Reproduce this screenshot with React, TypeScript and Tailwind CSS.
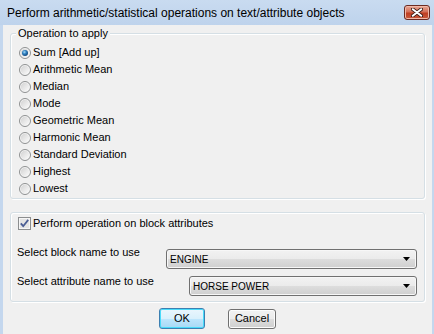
import React from "react";

const operations = [
  "Sum [Add up]",
  "Arithmetic Mean",
  "Median",
  "Mode",
  "Geometric Mean",
  "Harmonic Mean",
  "Standard Deviation",
  "Highest",
  "Lowest",
];

function Radio({ checked }: { checked?: boolean }) {
  return (
    <svg width="12" height="12" viewBox="0 0 12 12" className="shrink-0">
      <defs>
        <linearGradient id="radioFill" x1="0" y1="0" x2="1" y2="1">
          <stop offset="0" stopColor="#d2d2d2" />
          <stop offset="1" stopColor="#fbfbfb" />
        </linearGradient>
        <radialGradient id="radioDot" cx="0.4" cy="0.35" r="0.7">
          <stop offset="0" stopColor="#a6dbf8" />
          <stop offset="0.45" stopColor="#2e7fc0" />
          <stop offset="1" stopColor="#0d3f73" />
        </radialGradient>
      </defs>
      <circle cx="6" cy="6" r="5.5" fill="#f4f4f4" stroke="#8e9091" />
      <circle cx="6" cy="6" r="4.2" fill="url(#radioFill)" />
      {checked && <circle cx="6" cy="6" r="3" fill="url(#radioDot)" />}
    </svg>
  );
}

function Checkbox() {
  return (
    <svg width="13" height="13" viewBox="0 0 13 13" className="shrink-0">
      <rect x="0.5" y="0.5" width="12" height="12" fill="#f6f6f6" stroke="#8c8e8f" />
      <rect x="2" y="2" width="9" height="9" fill="#e4e4e4" />
      <path d="M2.8 6.4 L5.2 9.2 L10.2 2.9" fill="none" stroke="#4a5d94" strokeWidth="1.8" />
    </svg>
  );
}

function Combo({ value, width }: { value: string; width: string }) {
  return (
    <div
      className={`${width} h-[20px] flex items-center pl-[3px] pr-[6px] rounded-[3px] border border-[#707070] bg-[linear-gradient(#f2f2f2_0%,#ebebeb_50%,#dddddd_50%,#cfcfcf_100%)] shadow-[inset_0_0_0_1px_#f7f7f7] text-[10px]`}
    >
      <span className="flex-1">{value}</span>
      <svg width="7" height="4" viewBox="0 0 7 4">
        <path d="M0 0 H7 L3.5 4 Z" fill="#000" />
      </svg>
    </div>
  );
}

export default function App() {
  return (
    <div className="w-[434px] h-[334px] flex flex-col bg-[#c4d7ee] text-[11px] leading-[13px] text-black font-['Liberation_Sans',Arial,sans-serif]">
      {/* Title bar */}
      <div className="h-[25px] flex items-center pl-[7px] pr-[4px] bg-[linear-gradient(#c9dbf0,#bed3ec)]">
        <span className="text-[12px] flex-1 pt-[1px]">
          Perform arithmetic/statistical operations on text/attribute objects
        </span>
        <div className="self-start mt-[5px] w-[26px] h-[15px] rounded-[3px] border border-[#6b2a22] bg-[linear-gradient(#e8a897_0%,#d46f58_45%,#bf3e22_55%,#c85a3e_100%)] shadow-[inset_0_0_0_1px_#f0b9a8] flex items-center justify-center">
          <svg width="12" height="9" viewBox="0 0 12 9">
            <path
              d="M1.5 1 L10.5 8 M10.5 1 L1.5 8"
              stroke="#3a1a14"
              strokeWidth="3.6"
              strokeLinecap="round"
            />
            <path
              d="M1.8 1.2 L10.2 7.8 M10.2 1.2 L1.8 7.8"
              stroke="#fff"
              strokeWidth="2"
              strokeLinecap="round"
            />
          </svg>
        </div>
      </div>

      {/* Client area */}
      <div className="flex-1 ml-[3px] mr-[2px] bg-[#f0f0f0] pl-[7px] pr-[7px] flex flex-col">
        {/* Operation group */}
        <div className="relative mt-[8px] border border-[#d5dfe5] rounded-[3px] pt-[10px] pb-[1px] pl-[8px] flex flex-col shadow-[1px_1px_0_#fff,inset_1px_1px_0_#fff]">
          <span className="absolute -top-[7px] left-[5px] px-[2px] bg-[#f0f0f0]">
            Operation to apply
          </span>
          {operations.map((op, i) => (
            <div key={op} className="h-[17px] flex items-center gap-[2px]">
              <Radio checked={i === 0} />
              <span>{op}</span>
            </div>
          ))}
        </div>

        {/* Block attribute group */}
        <div className="mt-[13px] border border-[#d5dfe5] rounded-[3px] pt-[4px] pb-[5px] pl-[6px] pr-[7px] flex flex-col shadow-[1px_1px_0_#fff,inset_1px_1px_0_#fff]">
          <div className="h-[13px] flex items-center gap-[2px] pl-[1px]">
            <Checkbox />
            <span>Perform operation on block attributes</span>
          </div>
          <div className="mt-[16px] flex items-start justify-between">
            <span>Select block name to use</span>
            <div className="mt-[3px] flex">
              <Combo value="ENGINE" width="w-[251px]" />
            </div>
          </div>
          <div className="mt-[6px] flex items-start justify-between">
            <span>Select attribute name to use</span>
            <div className="mt-[1px] flex">
              <Combo value="HORSE POWER" width="w-[228px]" />
            </div>
          </div>
        </div>

        <div className="mt-[6px] flex justify-center items-center gap-[23px]">
          <button className="w-[46px] h-[21px] rounded-[3px] border border-[#3c7fb1] bg-[linear-gradient(#eaf6fd_0%,#d9f0fc_50%,#bee6fd_50%,#a7d9f5_100%)] shadow-[inset_0_0_0_1px_#48dbfa]">
            OK
          </button>
          <button className="w-[48px] h-[20px] rounded-[3px] border border-[#707070] bg-[linear-gradient(#f2f2f2_0%,#ebebeb_50%,#dddddd_50%,#cfcfcf_100%)] shadow-[inset_0_0_0_1px_#fcfcfc]">
            Cancel
          </button>
        </div>
      </div>
    </div>
  );
}
